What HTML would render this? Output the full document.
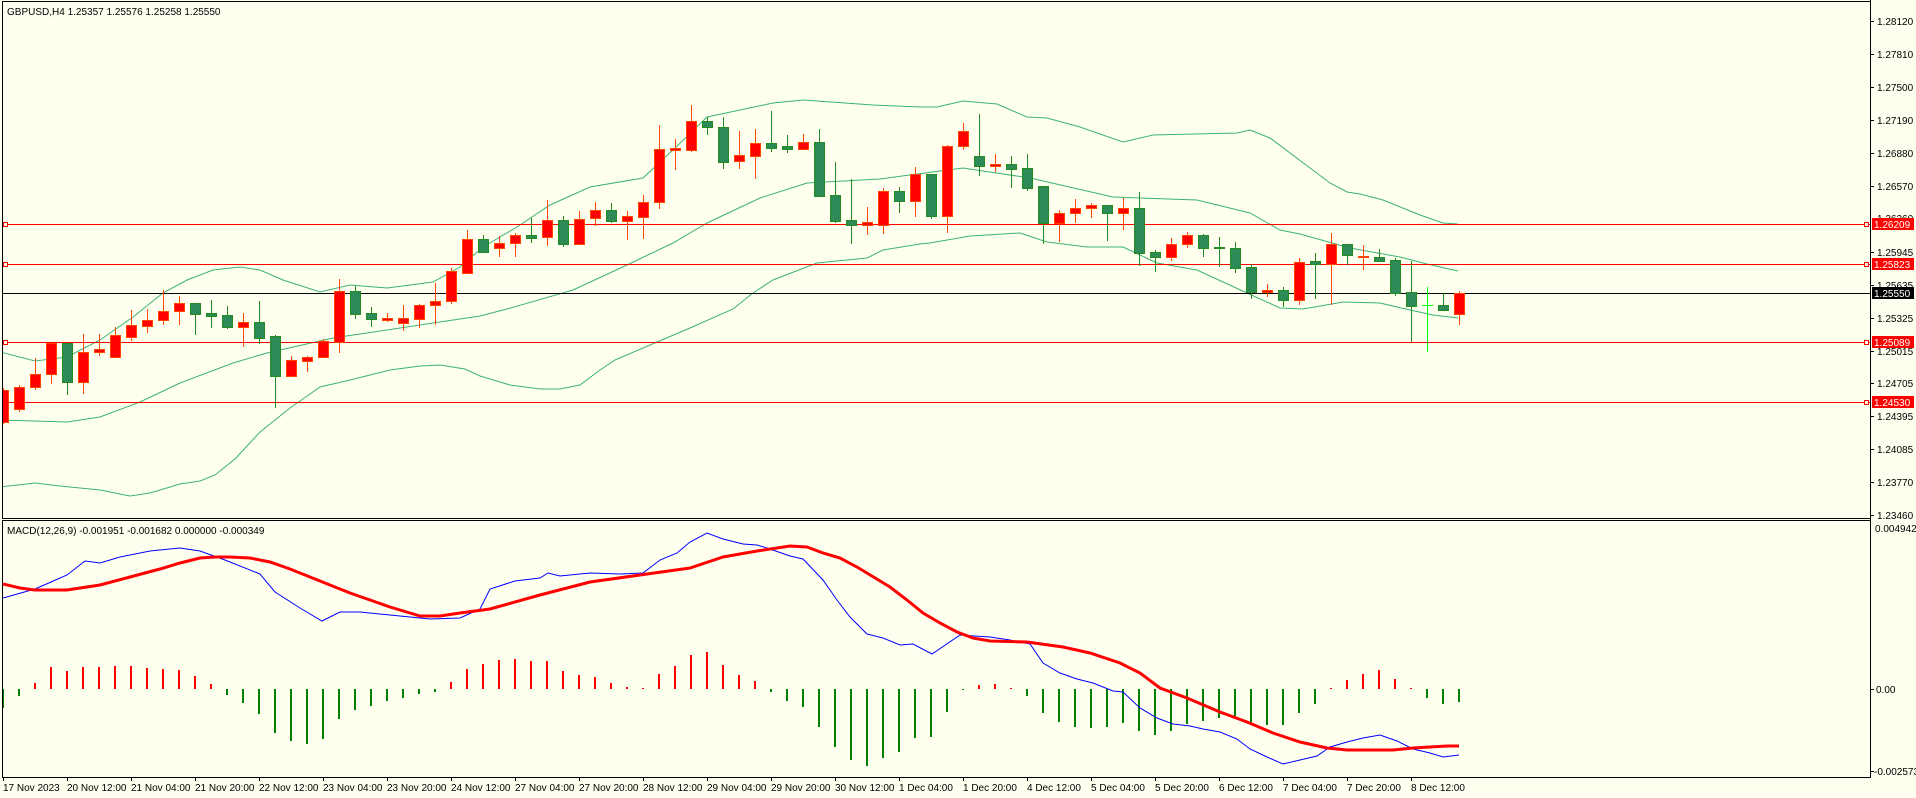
<!DOCTYPE html>
<html><head><meta charset="utf-8"><style>
html,body{margin:0;padding:0;background:#fffff0;}
svg{display:block;}
text{font-family:"Liberation Sans",sans-serif;font-size:10px;fill:#000;}
</style></head><body>
<svg width="1916" height="798" viewBox="0 0 1916 798" xmlns="http://www.w3.org/2000/svg">
<rect width="1916" height="798" fill="#fffff0"/>
<defs><clipPath id="mc"><rect x="3" y="2" width="1867" height="516"/></clipPath>
<clipPath id="dc"><rect x="3" y="521" width="1867" height="256"/></clipPath></defs>

<g clip-path="url(#mc)">
<g fill="none" stroke="#3cb371" stroke-width="1">
<polyline points="0,352 35,361 67,357 100,340 133,317 163,293 187,280 213,270 240,267 260,270 283,280 320,292 350,285 387,288 433,282 460,267 483,247 517,227 550,205 590,187 643,178 673,150 707,117 773,103 803,100 873,105 920,107 937,107 963,101 997,104 1027,117 1047,118 1080,127 1123,142 1153,135 1237,133 1250,130 1270,138 1330,183 1347,192 1360,194 1383,200 1420,215 1443,223 1458,224"/>
<polyline points="0,420 67,422 100,417 140,402 180,383 233,363 267,353 333,338 387,330 433,323 480,316 507,309 573,290 627,265 673,243 707,223 760,198 807,183 880,179 963,168 1030,178 1113,197 1197,200 1250,213 1280,230 1300,234 1350,248 1400,257 1427,264 1458,271"/>
<polyline points="0,487 35,483 60,486 100,490 130,496 150,493 180,484 200,481 215,475 235,459 260,432 290,408 310,394 320,387 350,380 370,375 390,370 420,366 440,365 465,369 480,376 510,385 540,389 560,389 580,385 600,370 615,360 650,345 690,328 733,309 753,293 773,280 817,263 867,258 883,250 920,244 930,243 970,236 1020,233 1047,242 1087,247 1123,247 1157,263 1197,270 1247,293 1280,308 1303,309 1343,302 1380,303 1410,310 1433,315 1458,318"/>
</g>
<g stroke-width="1">
<line x1="0" y1="224.5" x2="1870" y2="224.5" stroke="#ff0000"/>
<line x1="0" y1="264.5" x2="1870" y2="264.5" stroke="#ff0000"/>
<line x1="0" y1="342.5" x2="1870" y2="342.5" stroke="#ff0000"/>
<line x1="0" y1="402.5" x2="1870" y2="402.5" stroke="#ff0000"/>
<line x1="0" y1="293.5" x2="1870" y2="293.5" stroke="#000"/>
</g>
<g fill="#fffff0" stroke="#ff0000">
<rect x="3.5" y="222.5" width="4" height="4"/><rect x="3.5" y="262.5" width="4" height="4"/><rect x="3.5" y="340.5" width="4" height="4"/><rect x="3.5" y="400.5" width="4" height="4"/>
<rect x="1864.5" y="222.5" width="4" height="4"/><rect x="1864.5" y="262.5" width="4" height="4"/><rect x="1864.5" y="340.5" width="4" height="4"/><rect x="1864.5" y="400.5" width="4" height="4"/>
</g>
<g stroke-width="1">
<g stroke="#ff4500">
<line x1="3.5" y1="388" x2="3.5" y2="424"/><line x1="19.5" y1="385" x2="19.5" y2="412"/><line x1="35.5" y1="358" x2="35.5" y2="390"/><line x1="51.5" y1="343" x2="51.5" y2="384"/>
<line x1="83.5" y1="334" x2="83.5" y2="394"/><line x1="99.5" y1="334" x2="99.5" y2="356"/><line x1="115.5" y1="327" x2="115.5" y2="358"/><line x1="131.5" y1="310" x2="131.5" y2="341"/><line x1="147.5" y1="309" x2="147.5" y2="333"/><line x1="163.5" y1="290" x2="163.5" y2="325"/><line x1="179.5" y1="296" x2="179.5" y2="325"/>
<line x1="243.5" y1="313" x2="243.5" y2="347"/>
<line x1="291.5" y1="356" x2="291.5" y2="377"/><line x1="307.5" y1="356" x2="307.5" y2="372"/><line x1="323.5" y1="339" x2="323.5" y2="357"/><line x1="339.5" y1="279" x2="339.5" y2="353"/>
<line x1="387.5" y1="313" x2="387.5" y2="322"/><line x1="403.5" y1="305" x2="403.5" y2="331"/><line x1="419.5" y1="304" x2="419.5" y2="328"/><line x1="435.5" y1="283" x2="435.5" y2="325"/><line x1="451.5" y1="268" x2="451.5" y2="304"/><line x1="467.5" y1="230" x2="467.5" y2="274"/>
<line x1="499.5" y1="236" x2="499.5" y2="257"/><line x1="515.5" y1="233" x2="515.5" y2="257"/><line x1="547.5" y1="200" x2="547.5" y2="246"/><line x1="579.5" y1="211" x2="579.5" y2="245"/><line x1="595.5" y1="202" x2="595.5" y2="226"/><line x1="627.5" y1="211" x2="627.5" y2="240"/><line x1="643.5" y1="195" x2="643.5" y2="239"/><line x1="659.5" y1="125" x2="659.5" y2="209"/><line x1="675.5" y1="139" x2="675.5" y2="170"/><line x1="691.5" y1="105" x2="691.5" y2="152"/>
<line x1="739.5" y1="131" x2="739.5" y2="169"/><line x1="755.5" y1="129" x2="755.5" y2="179"/><line x1="803.5" y1="134" x2="803.5" y2="149"/>
<line x1="867.5" y1="207" x2="867.5" y2="235"/><line x1="883.5" y1="188" x2="883.5" y2="234"/><line x1="915.5" y1="167" x2="915.5" y2="217"/><line x1="947.5" y1="145" x2="947.5" y2="233"/><line x1="963.5" y1="123" x2="963.5" y2="150"/><line x1="995.5" y1="154" x2="995.5" y2="172"/>
<line x1="1059.5" y1="210" x2="1059.5" y2="242"/><line x1="1075.5" y1="199" x2="1075.5" y2="223"/><line x1="1091.5" y1="203" x2="1091.5" y2="218"/><line x1="1123.5" y1="198" x2="1123.5" y2="230"/>
<line x1="1171.5" y1="238" x2="1171.5" y2="261"/><line x1="1187.5" y1="232" x2="1187.5" y2="248"/><line x1="1267.5" y1="284" x2="1267.5" y2="297"/><line x1="1299.5" y1="258" x2="1299.5" y2="305"/><line x1="1331.5" y1="233" x2="1331.5" y2="305"/><line x1="1363.5" y1="245" x2="1363.5" y2="270"/><line x1="1459.5" y1="291" x2="1459.5" y2="325"/>
</g>
<g stroke="#228b22">
<line x1="67.5" y1="343" x2="67.5" y2="395"/><line x1="195.5" y1="303" x2="195.5" y2="335"/><line x1="211.5" y1="300" x2="211.5" y2="328"/><line x1="227.5" y1="306" x2="227.5" y2="329"/><line x1="259.5" y1="301" x2="259.5" y2="344"/><line x1="275.5" y1="335" x2="275.5" y2="408"/>
<line x1="355.5" y1="286" x2="355.5" y2="319"/><line x1="371.5" y1="307" x2="371.5" y2="327"/><line x1="483.5" y1="235" x2="483.5" y2="253"/><line x1="531.5" y1="218" x2="531.5" y2="243"/><line x1="563.5" y1="216" x2="563.5" y2="247"/><line x1="611.5" y1="203" x2="611.5" y2="223"/>
<line x1="707.5" y1="117" x2="707.5" y2="135"/><line x1="723.5" y1="117" x2="723.5" y2="169"/><line x1="771.5" y1="111" x2="771.5" y2="152"/><line x1="787.5" y1="135" x2="787.5" y2="153"/><line x1="819.5" y1="129" x2="819.5" y2="196"/><line x1="835.5" y1="162" x2="835.5" y2="223"/><line x1="851.5" y1="179" x2="851.5" y2="244"/><line x1="899.5" y1="187" x2="899.5" y2="213"/><line x1="931.5" y1="174" x2="931.5" y2="219"/>
<line x1="979.5" y1="114" x2="979.5" y2="176"/><line x1="1011.5" y1="156" x2="1011.5" y2="188"/><line x1="1027.5" y1="154" x2="1027.5" y2="191"/><line x1="1043.5" y1="186" x2="1043.5" y2="244"/><line x1="1107.5" y1="205" x2="1107.5" y2="241"/><line x1="1139.5" y1="192" x2="1139.5" y2="266"/><line x1="1155.5" y1="250" x2="1155.5" y2="272"/>
<line x1="1203.5" y1="234" x2="1203.5" y2="257"/><line x1="1219.5" y1="237" x2="1219.5" y2="267"/><line x1="1235.5" y1="242" x2="1235.5" y2="273"/><line x1="1251.5" y1="264" x2="1251.5" y2="299"/><line x1="1283.5" y1="287" x2="1283.5" y2="307"/><line x1="1315.5" y1="253" x2="1315.5" y2="299"/><line x1="1347.5" y1="244" x2="1347.5" y2="265"/><line x1="1379.5" y1="249" x2="1379.5" y2="262"/><line x1="1395.5" y1="258" x2="1395.5" y2="296"/><line x1="1411.5" y1="261" x2="1411.5" y2="342"/><line x1="1443.5" y1="293" x2="1443.5" y2="310"/>
</g>
<line x1="1427.5" y1="287" x2="1427.5" y2="352" stroke="#00ff00"/>
<line x1="1422" y1="305.5" x2="1433" y2="305.5" stroke="#00ff00"/>
</g>
<g fill="#ff0000" stroke="#ff4500">
<rect x="-1.5" y="390.5" width="10" height="32"/><rect x="14.5" y="387.5" width="10" height="22"/><rect x="30.5" y="374.5" width="10" height="13"/><rect x="46.5" y="343.5" width="10" height="31"/>
<rect x="78.5" y="352.5" width="10" height="30"/><rect x="94.5" y="349.5" width="10" height="3"/><rect x="110.5" y="335.5" width="10" height="22"/><rect x="126.5" y="325.5" width="10" height="12"/><rect x="142.5" y="320.5" width="10" height="6"/><rect x="158.5" y="311.5" width="10" height="9"/><rect x="174.5" y="303.5" width="10" height="8"/>
<rect x="238.5" y="322.5" width="10" height="5"/>
<rect x="286.5" y="360.5" width="10" height="16"/><rect x="302.5" y="357.5" width="10" height="4"/><rect x="318.5" y="341.5" width="10" height="16"/><rect x="334.5" y="291.5" width="10" height="51"/>
<rect x="382.5" y="318.5" width="10" height="2"/><rect x="398.5" y="318.5" width="10" height="5"/><rect x="414.5" y="305.5" width="10" height="14"/><rect x="430.5" y="301.5" width="10" height="4"/><rect x="446.5" y="271.5" width="10" height="30"/><rect x="462.5" y="239.5" width="10" height="34"/>
<rect x="494.5" y="243.5" width="10" height="5"/><rect x="510.5" y="235.5" width="10" height="8"/><rect x="542.5" y="220.5" width="10" height="17"/><rect x="574.5" y="219.5" width="10" height="25"/><rect x="590.5" y="210.5" width="10" height="8"/><rect x="622.5" y="216.5" width="10" height="5"/><rect x="638.5" y="202.5" width="10" height="15"/><rect x="654.5" y="149.5" width="10" height="53"/><rect x="670.5" y="148.5" width="10" height="2"/><rect x="686.5" y="121.5" width="10" height="29"/>
<rect x="734.5" y="155.5" width="10" height="6"/><rect x="750.5" y="143.5" width="10" height="13"/><rect x="798.5" y="142.5" width="10" height="7"/>
<rect x="862.5" y="222.5" width="10" height="3"/><rect x="878.5" y="191.5" width="10" height="34"/><rect x="910.5" y="174.5" width="10" height="27"/><rect x="942.5" y="146.5" width="10" height="70"/><rect x="958.5" y="131.5" width="10" height="15"/><rect x="990.5" y="164.5" width="10" height="2"/>
<rect x="1054.5" y="213.5" width="10" height="10"/><rect x="1070.5" y="208.5" width="10" height="5"/><rect x="1086.5" y="205.5" width="10" height="3"/><rect x="1118.5" y="208.5" width="10" height="5"/>
<rect x="1166.5" y="244.5" width="10" height="13"/><rect x="1182.5" y="235.5" width="10" height="9"/><rect x="1262.5" y="290.5" width="10" height="2"/><rect x="1294.5" y="262.5" width="10" height="38"/><rect x="1326.5" y="244.5" width="10" height="20"/><rect x="1358.5" y="256.5" width="10" height="1"/><rect x="1454.5" y="293.5" width="10" height="21"/>
</g>
<g fill="#2e8b57" stroke="#228b22">
<rect x="62.5" y="343.5" width="10" height="39"/><rect x="190.5" y="303.5" width="10" height="11"/><rect x="206.5" y="313.5" width="10" height="3"/><rect x="222.5" y="315.5" width="10" height="12"/><rect x="254.5" y="322.5" width="10" height="16"/><rect x="270.5" y="336.5" width="10" height="40"/>
<rect x="350.5" y="291.5" width="10" height="23"/><rect x="366.5" y="313.5" width="10" height="6"/><rect x="478.5" y="239.5" width="10" height="13"/><rect x="526.5" y="235.5" width="10" height="3"/><rect x="558.5" y="220.5" width="10" height="24"/><rect x="606.5" y="210.5" width="10" height="11"/>
<rect x="702.5" y="121.5" width="10" height="6"/><rect x="718.5" y="127.5" width="10" height="35"/><rect x="766.5" y="143.5" width="10" height="5"/><rect x="782.5" y="146.5" width="10" height="3"/><rect x="814.5" y="142.5" width="10" height="54"/><rect x="830.5" y="195.5" width="10" height="26"/><rect x="846.5" y="220.5" width="10" height="5"/><rect x="894.5" y="191.5" width="10" height="10"/><rect x="926.5" y="174.5" width="10" height="42"/>
<rect x="974.5" y="156.5" width="10" height="10"/><rect x="1006.5" y="164.5" width="10" height="5"/><rect x="1022.5" y="168.5" width="10" height="20"/><rect x="1038.5" y="186.5" width="10" height="37"/><rect x="1102.5" y="205.5" width="10" height="8"/><rect x="1134.5" y="208.5" width="10" height="45"/><rect x="1150.5" y="252.5" width="10" height="5"/>
<rect x="1198.5" y="235.5" width="10" height="13"/><rect x="1214.5" y="247.5" width="10" height="1"/><rect x="1230.5" y="248.5" width="10" height="20"/><rect x="1246.5" y="267.5" width="10" height="25"/><rect x="1278.5" y="290.5" width="10" height="10"/><rect x="1310.5" y="261.5" width="10" height="3"/><rect x="1342.5" y="244.5" width="10" height="11"/><rect x="1374.5" y="257.5" width="10" height="4"/><rect x="1390.5" y="260.5" width="10" height="33"/><rect x="1406.5" y="292.5" width="10" height="14"/><rect x="1438.5" y="305.5" width="10" height="5"/>
</g>
</g>

<g clip-path="url(#dc)">
<g fill="#ff0000">
<rect x="34" y="683" width="2" height="6"/><rect x="50" y="667" width="2" height="22"/><rect x="66" y="671" width="2" height="18"/><rect x="82" y="667" width="2" height="22"/><rect x="98" y="667" width="2" height="22"/><rect x="114" y="666" width="2" height="23"/><rect x="130" y="666" width="2" height="23"/><rect x="146" y="668" width="2" height="21"/><rect x="162" y="669" width="2" height="20"/><rect x="178" y="670" width="2" height="19"/><rect x="194" y="676" width="2" height="13"/><rect x="210" y="684" width="2" height="5"/>
<rect x="450" y="682" width="2" height="7"/><rect x="466" y="669" width="2" height="20"/><rect x="482" y="664" width="2" height="25"/><rect x="498" y="660" width="2" height="29"/><rect x="514" y="659" width="2" height="30"/><rect x="530" y="661" width="2" height="28"/><rect x="546" y="661" width="2" height="28"/><rect x="562" y="671" width="2" height="18"/><rect x="578" y="675" width="2" height="14"/><rect x="594" y="677" width="2" height="12"/><rect x="610" y="683" width="2" height="6"/><rect x="626" y="687" width="2" height="2"/><rect x="642" y="688" width="2" height="1"/><rect x="658" y="674" width="2" height="15"/><rect x="674" y="666" width="2" height="23"/><rect x="690" y="655" width="2" height="34"/><rect x="706" y="652" width="2" height="37"/><rect x="722" y="665" width="2" height="24"/><rect x="738" y="675" width="2" height="14"/><rect x="754" y="681" width="2" height="8"/>
<rect x="978" y="685" width="2" height="4"/><rect x="994" y="684" width="2" height="5"/><rect x="1010" y="688" width="2" height="1"/>
<rect x="1330" y="688" width="2" height="1"/><rect x="1346" y="680" width="2" height="9"/><rect x="1362" y="674" width="2" height="15"/><rect x="1378" y="670" width="2" height="19"/><rect x="1394" y="679" width="2" height="10"/><rect x="1410" y="688" width="2" height="1"/>
</g>
<g fill="#008000">
<rect x="2" y="689" width="2" height="19"/><rect x="18" y="689" width="2" height="7"/>
<rect x="226" y="689" width="2" height="6"/><rect x="242" y="689" width="2" height="14"/><rect x="258" y="689" width="2" height="25"/><rect x="274" y="689" width="2" height="44"/><rect x="290" y="689" width="2" height="52"/><rect x="306" y="689" width="2" height="55"/><rect x="322" y="689" width="2" height="50"/><rect x="338" y="689" width="2" height="30"/><rect x="354" y="689" width="2" height="21"/><rect x="370" y="689" width="2" height="17"/><rect x="386" y="689" width="2" height="12"/><rect x="402" y="689" width="2" height="9"/><rect x="418" y="689" width="2" height="5"/><rect x="434" y="689" width="2" height="3"/>
<rect x="770" y="689" width="2" height="3"/><rect x="786" y="689" width="2" height="12"/><rect x="802" y="689" width="2" height="18"/><rect x="818" y="689" width="2" height="38"/><rect x="834" y="689" width="2" height="58"/><rect x="850" y="689" width="2" height="71"/><rect x="866" y="689" width="2" height="77"/><rect x="882" y="689" width="2" height="69"/><rect x="898" y="689" width="2" height="63"/><rect x="914" y="689" width="2" height="49"/><rect x="930" y="689" width="2" height="48"/><rect x="946" y="689" width="2" height="23"/><rect x="962" y="689" width="2" height="1"/>
<rect x="1026" y="689" width="2" height="7"/><rect x="1042" y="689" width="2" height="24"/><rect x="1058" y="689" width="2" height="33"/><rect x="1074" y="689" width="2" height="38"/><rect x="1090" y="689" width="2" height="39"/><rect x="1106" y="689" width="2" height="38"/><rect x="1122" y="689" width="2" height="34"/><rect x="1138" y="689" width="2" height="42"/><rect x="1154" y="689" width="2" height="46"/><rect x="1170" y="689" width="2" height="42"/><rect x="1186" y="689" width="2" height="35"/><rect x="1202" y="689" width="2" height="32"/><rect x="1218" y="689" width="2" height="29"/><rect x="1234" y="689" width="2" height="29"/><rect x="1250" y="689" width="2" height="35"/><rect x="1266" y="689" width="2" height="36"/><rect x="1282" y="689" width="2" height="36"/><rect x="1298" y="689" width="2" height="24"/><rect x="1314" y="689" width="2" height="15"/>
<rect x="1426" y="689" width="2" height="9"/><rect x="1442" y="689" width="2" height="15"/><rect x="1458" y="689" width="2" height="13"/>
</g>
<polyline fill="none" stroke="#0000ff" stroke-width="1" points="3,598 35,589 51,582 67,575 85,561 100,563 120,557 150,551 180,548 200,551 225,560 260,574 275,592 300,608 322,621 340,612 360,612 400,616 430,619 460,618 480,609 490,589 515,581 540,578 548,573 560,576 590,573 620,574 643,573 660,560 677,553 690,542 707,533 723,539 743,544 757,545 770,549 790,556 803,559 823,580 837,600 850,617 867,634 883,638 900,645 913,644 932,654 960,635 990,637 1010,640 1030,644 1043,663 1060,673 1077,679 1093,683 1113,691 1123,692 1140,708 1157,718 1173,724 1190,726 1203,729 1220,732 1237,739 1250,749 1267,757 1283,764 1300,760 1317,756 1330,747 1347,742 1363,738 1380,735 1397,741 1413,749 1430,753 1443,757 1459,755"/>
<polyline fill="none" stroke="#ff0000" stroke-width="3" points="3,584 20,588 35,590 67,590 100,585 130,577 160,569 180,563 200,558 215,557 230,557 250,558 270,562 290,569 310,577 330,585 350,593 370,600 390,607 410,613 420,616 440,616 460,613 490,609 540,595 590,582 640,575 690,568 723,557 757,551 790,546 807,547 823,553 840,558 857,567 890,587 907,600 923,613 940,623 957,632 973,638 990,641 1027,642 1063,647 1090,653 1120,663 1140,673 1160,688 1187,698 1220,712 1247,722 1273,733 1300,742 1327,748 1347,750 1393,750 1413,748 1447,746 1459,746"/>
</g>

<g stroke="#000" stroke-width="1" fill="none">
<rect x="2.5" y="1.5" width="1868" height="517"/>
<rect x="2.5" y="520.5" width="1868" height="257"/>
<line x1="1870.5" y1="0" x2="1870.5" y2="778"/>
</g>
<g stroke="#000">
<line x1="1871" y1="21.5" x2="1874" y2="21.5"/><line x1="1871" y1="54.5" x2="1874" y2="54.5"/><line x1="1871" y1="87.5" x2="1874" y2="87.5"/><line x1="1871" y1="120.5" x2="1874" y2="120.5"/><line x1="1871" y1="153.5" x2="1874" y2="153.5"/><line x1="1871" y1="186.5" x2="1874" y2="186.5"/><line x1="1871" y1="252.5" x2="1874" y2="252.5"/><line x1="1871" y1="285.5" x2="1874" y2="285.5"/><line x1="1871" y1="318.5" x2="1874" y2="318.5"/><line x1="1871" y1="351.5" x2="1874" y2="351.5"/><line x1="1871" y1="383.5" x2="1874" y2="383.5"/><line x1="1871" y1="416.5" x2="1874" y2="416.5"/><line x1="1871" y1="449.5" x2="1874" y2="449.5"/><line x1="1871" y1="482.5" x2="1874" y2="482.5"/><line x1="1871" y1="515.5" x2="1874" y2="515.5"/>
<line x1="1871" y1="689.5" x2="1874" y2="689.5"/><line x1="1871" y1="771.5" x2="1874" y2="771.5"/>
</g>
<g>
<text x="1877" y="25">1.28120</text><text x="1877" y="58">1.27810</text><text x="1877" y="91">1.27500</text><text x="1877" y="124">1.27190</text><text x="1877" y="157">1.26880</text><text x="1877" y="190">1.26570</text><text x="1877" y="222">1.26260</text><text x="1877" y="256">1.25945</text><text x="1877" y="289">1.25635</text><text x="1877" y="322">1.25325</text><text x="1877" y="355">1.25015</text><text x="1877" y="387">1.24705</text><text x="1877" y="420">1.24395</text><text x="1877" y="453">1.24085</text><text x="1877" y="486">1.23770</text><text x="1877" y="519">1.23460</text>
<text x="1875" y="532">0.004942</text><text x="1876" y="693">0.00</text><text x="1874" y="775">-0.002573</text>
</g>
<rect x="1872" y="218" width="42" height="12" fill="#ff0000"/><text x="1874" y="228" style="fill:#fff">1.26209</text>
<rect x="1872" y="258" width="42" height="12" fill="#ff0000"/><text x="1874" y="268" style="fill:#fff">1.25823</text>
<rect x="1872" y="287" width="42" height="12" fill="#000"/><text x="1874" y="297" style="fill:#fff">1.25550</text>
<rect x="1872" y="336" width="42" height="12" fill="#ff0000"/><text x="1874" y="346" style="fill:#fff">1.25089</text>
<rect x="1872" y="396" width="42" height="12" fill="#ff0000"/><text x="1874" y="406" style="fill:#fff">1.24530</text>

<text x="7" y="15">GBPUSD,H4  1.25357 1.25576 1.25258 1.25550</text>
<text x="7" y="534">MACD(12,26,9) -0.001951 -0.001682 0.000000 -0.000349</text>

<g stroke="#000">
<line x1="3.5" y1="778" x2="3.5" y2="781"/><line x1="67.5" y1="778" x2="67.5" y2="781"/><line x1="131.5" y1="778" x2="131.5" y2="781"/><line x1="195.5" y1="778" x2="195.5" y2="781"/><line x1="259.5" y1="778" x2="259.5" y2="781"/><line x1="323.5" y1="778" x2="323.5" y2="781"/><line x1="387.5" y1="778" x2="387.5" y2="781"/><line x1="451.5" y1="778" x2="451.5" y2="781"/><line x1="515.5" y1="778" x2="515.5" y2="781"/><line x1="579.5" y1="778" x2="579.5" y2="781"/><line x1="643.5" y1="778" x2="643.5" y2="781"/><line x1="707.5" y1="778" x2="707.5" y2="781"/><line x1="771.5" y1="778" x2="771.5" y2="781"/><line x1="835.5" y1="778" x2="835.5" y2="781"/><line x1="899.5" y1="778" x2="899.5" y2="781"/><line x1="963.5" y1="778" x2="963.5" y2="781"/><line x1="1027.5" y1="778" x2="1027.5" y2="781"/><line x1="1091.5" y1="778" x2="1091.5" y2="781"/><line x1="1155.5" y1="778" x2="1155.5" y2="781"/><line x1="1219.5" y1="778" x2="1219.5" y2="781"/><line x1="1283.5" y1="778" x2="1283.5" y2="781"/><line x1="1347.5" y1="778" x2="1347.5" y2="781"/><line x1="1411.5" y1="778" x2="1411.5" y2="781"/>
</g>
<g>
<text x="3" y="791">17 Nov 2023</text><text x="67" y="791">20 Nov 12:00</text><text x="131" y="791">21 Nov 04:00</text><text x="195" y="791">21 Nov 20:00</text><text x="259" y="791">22 Nov 12:00</text><text x="323" y="791">23 Nov 04:00</text><text x="387" y="791">23 Nov 20:00</text><text x="451" y="791">24 Nov 12:00</text><text x="515" y="791">27 Nov 04:00</text><text x="579" y="791">27 Nov 20:00</text><text x="643" y="791">28 Nov 12:00</text><text x="707" y="791">29 Nov 04:00</text><text x="771" y="791">29 Nov 20:00</text><text x="835" y="791">30 Nov 12:00</text><text x="899" y="791">1 Dec 04:00</text><text x="963" y="791">1 Dec 20:00</text><text x="1027" y="791">4 Dec 12:00</text><text x="1091" y="791">5 Dec 04:00</text><text x="1155" y="791">5 Dec 20:00</text><text x="1219" y="791">6 Dec 12:00</text><text x="1283" y="791">7 Dec 04:00</text><text x="1347" y="791">7 Dec 20:00</text><text x="1411" y="791">8 Dec 12:00</text>
</g>
</svg>
</body></html>
